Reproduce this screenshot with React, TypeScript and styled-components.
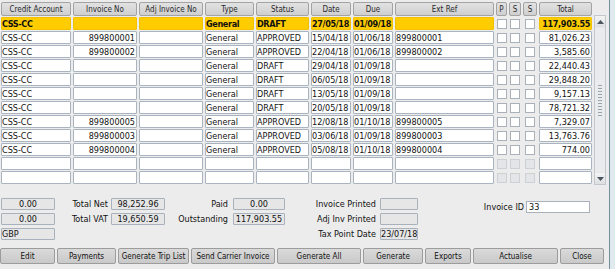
import React from 'react';
import styled, { createGlobalStyle } from 'styled-components';

const FONT = `"DejaVu Sans Condensed", "Liberation Sans", Arial, sans-serif`;

const GlobalStyle = createGlobalStyle`
  html, body {
    margin: 0;
    padding: 0;
    background: #ececec;
    font-family: ${FONT};
    font-stretch: condensed;
    color: #111;
  }
`;

type Row = {
  account: string;
  invoice: string;
  adj: string;
  type: string;
  status: string;
  date: string;
  due: string;
  ext: string;
  total: string;
};

const rows: Row[] = [
  { account: 'CSS-CC', invoice: '', adj: '', type: 'General', status: 'DRAFT', date: '27/05/18', due: '01/09/18', ext: '', total: '117,903.55' },
  { account: 'CSS-CC', invoice: '899800001', adj: '', type: 'General', status: 'APPROVED', date: '15/04/18', due: '01/06/18', ext: '899800001', total: '81,026.23' },
  { account: 'CSS-CC', invoice: '899800002', adj: '', type: 'General', status: 'APPROVED', date: '22/04/18', due: '01/06/18', ext: '899800002', total: '3,585.60' },
  { account: 'CSS-CC', invoice: '', adj: '', type: 'General', status: 'DRAFT', date: '29/04/18', due: '01/09/18', ext: '', total: '22,440.43' },
  { account: 'CSS-CC', invoice: '', adj: '', type: 'General', status: 'DRAFT', date: '06/05/18', due: '01/09/18', ext: '', total: '29,848.20' },
  { account: 'CSS-CC', invoice: '', adj: '', type: 'General', status: 'DRAFT', date: '13/05/18', due: '01/09/18', ext: '', total: '9,157.13' },
  { account: 'CSS-CC', invoice: '', adj: '', type: 'General', status: 'DRAFT', date: '20/05/18', due: '01/09/18', ext: '', total: '78,721.32' },
  { account: 'CSS-CC', invoice: '899800005', adj: '', type: 'General', status: 'APPROVED', date: '12/08/18', due: '01/10/18', ext: '899800005', total: '7,329.07' },
  { account: 'CSS-CC', invoice: '899800003', adj: '', type: 'General', status: 'APPROVED', date: '03/06/18', due: '01/09/18', ext: '899800003', total: '13,763.76' },
  { account: 'CSS-CC', invoice: '899800004', adj: '', type: 'General', status: 'APPROVED', date: '05/08/18', due: '01/10/18', ext: '899800004', total: '774.00' },
];

const EMPTY_ROWS = 2;

const headers = ['Credit Account', 'Invoice No', 'Adj Invoice No', 'Type', 'Status', 'Date', 'Due', 'Ext Ref', 'P', 'S', 'S', 'Total'];

const buttons = [
  { label: 'Edit', w: 55 },
  { label: 'Payments', w: 59 },
  { label: 'Generate Trip List', w: 71 },
  { label: 'Send Carrier Invoice', w: 84 },
  { label: 'Generate All', w: 84 },
  { label: 'Generate', w: 60 },
  { label: 'Exports', w: 46 },
  { label: 'Actualise', w: 85 },
  { label: 'Close', w: 44 },
];

export default function App() {
  return (
    <>
      <GlobalStyle />
      <Frame>
        <Main>
          <TableArea>
            <Grid>
              {headers.map((h, i) => (
                <HeaderCell key={i}>{h}</HeaderCell>
              ))}
              {rows.map((r, i) => {
                const sel = i === 0;
                return (
                  <React.Fragment key={i}>
                    <Cell $sel={sel}>{r.account}</Cell>
                    <Cell $sel={sel} $right>{r.invoice}</Cell>
                    <Cell $sel={sel}>{r.adj}</Cell>
                    <Cell $sel={sel}>{r.type}</Cell>
                    <Cell $sel={sel}>{r.status}</Cell>
                    <Cell $sel={sel}>{r.date}</Cell>
                    <Cell $sel={sel}>{r.due}</Cell>
                    <Cell $sel={sel}>{r.ext}</Cell>
                    <CheckCell><Check /></CheckCell>
                    <CheckCell><Check /></CheckCell>
                    <CheckCell><Check /></CheckCell>
                    <Cell $sel={sel} $right>{r.total}</Cell>
                  </React.Fragment>
                );
              })}
              {Array.from({ length: EMPTY_ROWS }).map((_, i) => (
                <React.Fragment key={`e${i}`}>
                  {Array.from({ length: 8 }).map((__, j) => (
                    <Cell key={j} />
                  ))}
                  <CheckCell><Check $disabled /></CheckCell>
                  <CheckCell><Check $disabled /></CheckCell>
                  <CheckCell><Check $disabled /></CheckCell>
                  <Cell />
                </React.Fragment>
              ))}
            </Grid>
            <ScrollBar>
              <ScrollButton>
                <svg width="7" height="4" viewBox="0 0 7 4">
                  <path d="M0 4 L3.5 0 L7 4 Z" fill="#4a5560" />
                </svg>
              </ScrollButton>
              <Track>
                <Thumb>
                  <Grip />
                </Thumb>
              </Track>
              <ScrollButton>
                <svg width="7" height="4" viewBox="0 0 7 4">
                  <path d="M0 0 L3.5 4 L7 0 Z" fill="#4a5560" />
                </svg>
              </ScrollButton>
            </ScrollBar>
          </TableArea>

          <Summary>
            <StackCol>
              <Field $w={54} $align="center">0.00</Field>
              <Field $w={54} $align="center">0.00</Field>
              <Field $w={54}>GBP</Field>
            </StackCol>
            <LabelGrid $label={53} $gap={3}>
              <Label>Total Net</Label>
              <Field $w={54} $align="center">98,252.96</Field>
              <Label>Total VAT</Label>
              <Field $w={54} $align="center">19,650.59</Field>
            </LabelGrid>
            <LabelGrid $label={63} $gap={5}>
              <Label>Paid</Label>
              <Field $w={52} $align="center">0.00</Field>
              <Label>Outstanding</Label>
              <Field $w={52} $align="center">117,903.55</Field>
            </LabelGrid>
            <LabelGrid $label={91} $gap={4}>
              <Label>Invoice Printed</Label>
              <Field $w={38} />
              <Label>Adj Inv Printed</Label>
              <Field $w={38} />
              <Label>Tax Point Date</Label>
              <Field $w={38}>23/07/18</Field>
            </LabelGrid>
            <IdGroup>
              <Label>Invoice ID</Label>
              <Input>33</Input>
            </IdGroup>
          </Summary>

          <ButtonBar>
            {buttons.map((b) => (
              <Button key={b.label} $w={b.w}>
                {b.label}
              </Button>
            ))}
          </ButtonBar>
        </Main>
        <Edge />
      </Frame>
    </>
  );
}

const Frame = styled.div`
  width: 615px;
  height: 269px;
  display: flex;
  overflow: hidden;
  background: #ececec;
`;

const Main = styled.div`
  width: 609px;
  display: flex;
  flex-direction: column;
`;

const Edge = styled.div`
  flex: 1;
  border-left: 1px solid #6f8f9c;
  background: #dfe9ee;
`;

const TableArea = styled.div`
  display: flex;
  padding: 2px 0 0 1px;
`;

const Grid = styled.div`
  display: grid;
  grid-template-columns: 70px 64px 64px 49px 53px 40px 40px 99px 11px 12px 14px 53px;
  grid-template-rows: 14px;
  grid-auto-rows: 13px;
  column-gap: 2px;
  row-gap: 1px;
`;

const HeaderCell = styled.div`
  display: flex;
  align-items: center;
  justify-content: center;
  font-size: 8px;
  color: #2a2a2a;
  background: linear-gradient(#e2e2e2, #cfcfcf);
  border: 1px solid #a3a3a3;
  border-radius: 2px;
  white-space: nowrap;
  overflow: hidden;
`;

const Cell = styled.div<{ $sel?: boolean; $right?: boolean }>`
  display: flex;
  align-items: center;
  justify-content: ${(p) => (p.$right ? 'flex-end' : 'flex-start')};
  padding: 0 1px 0 0;
  font-size: 9px;
  font-weight: ${(p) => (p.$sel ? 'bold' : 'normal')};
  letter-spacing: ${(p) => (p.$sel ? '-0.35px' : '0')};
  background: ${(p) => (p.$sel ? '#ffcc00' : '#ffffff')};
  border: 1px solid ${(p) => (p.$sel ? '#f2c200' : '#aab4c1')};
  border-radius: 1px;
  white-space: nowrap;
  overflow: hidden;
`;

const CheckCell = styled.div`
  display: flex;
  align-items: center;
  justify-content: center;
`;

const Check = styled.div<{ $disabled?: boolean }>`
  width: 10px;
  height: 10px;
  box-sizing: border-box;
  background: ${(p) => (p.$disabled ? '#e3e5e7' : '#ffffff')};
  border: 1px solid ${(p) => (p.$disabled ? '#cdd1d5' : '#aab1b9')};
`;

const ScrollBar = styled.div`
  width: 12px;
  height: 170px;
  margin: 13px 0 0 2px;
  display: flex;
  flex-direction: column;
  background: #e4e6e8;
  border: 1px solid #c2c8ce;
  box-sizing: border-box;
`;

const ScrollButton = styled.div`
  height: 11px;
  display: flex;
  align-items: center;
  justify-content: center;
  background: linear-gradient(#f4f4f4, #dcdee0);
`;

const Track = styled.div`
  flex: 1;
  display: flex;
  padding: 1px 0;
`;

const Thumb = styled.div`
  flex: 1;
  display: flex;
  align-items: center;
  justify-content: center;
  background: #e9ebec;
`;

const Grip = styled.div`
  width: 4px;
  height: 32px;
  background-image: radial-gradient(#9aa4ad 0.6px, transparent 0.8px);
  background-size: 2px 3px;
`;

const Summary = styled.div`
  display: flex;
  align-items: flex-start;
  padding: 13px 0 0 1px;
  height: 42px;
`;

const StackCol = styled.div`
  display: flex;
  flex-direction: column;
  gap: 3px;
`;

const LabelGrid = styled.div<{ $label: number; $gap: number }>`
  display: grid;
  grid-template-columns: ${(p) => p.$label}px auto;
  column-gap: ${(p) => p.$gap}px;
  row-gap: 3px;
  align-items: center;
`;

const Label = styled.div`
  font-size: 9px;
  text-align: right;
  white-space: nowrap;
  color: #111;
`;

const Field = styled.div<{ $w: number; $align?: string }>`
  width: ${(p) => p.$w}px;
  height: 12px;
  box-sizing: border-box;
  padding: 0;
  display: flex;
  align-items: center;
  justify-content: ${(p) => (p.$align === 'center' ? 'center' : 'flex-start')};
  font-size: 9px;
  background: #e6e6e6;
  border: 1px solid #a9b2bc;
  border-radius: 1px;
  white-space: nowrap;
  overflow: hidden;
`;

const IdGroup = styled.div`
  display: grid;
  grid-template-columns: 106px 64px;
  column-gap: 2px;
  align-items: center;
  margin-top: 3px;
`;

const Input = styled.div`
  height: 12px;
  box-sizing: border-box;
  padding: 0 2px;
  display: flex;
  align-items: center;
  font-size: 9px;
  background: #ffffff;
  border: 1px solid #a9b2bc;
`;

const ButtonBar = styled.div`
  display: flex;
  gap: 2px;
  margin-top: 8px;
`;

const Button = styled.div<{ $w: number }>`
  width: ${(p) => p.$w}px;
  height: 16px;
  box-sizing: border-box;
  display: flex;
  align-items: center;
  justify-content: center;
  font-size: 8px;
  color: #111;
  background: linear-gradient(#dadada, #c9c9c9);
  border: 1px solid #9c9c9c;
  border-radius: 2px;
  white-space: nowrap;
`;
